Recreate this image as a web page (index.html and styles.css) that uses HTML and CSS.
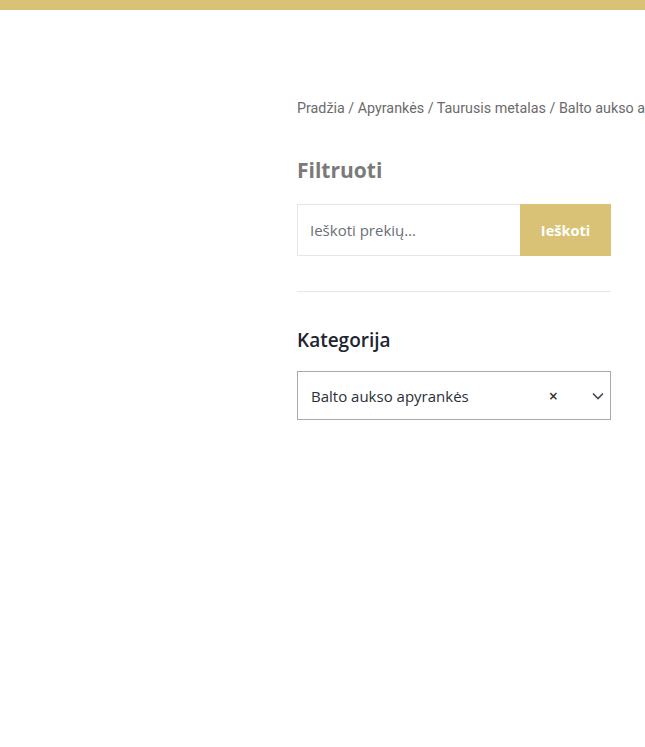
FILE: index.html
```html
<!DOCTYPE html>
<html lang="lt">
<head>
<meta charset="utf-8">
<link rel="stylesheet" href="styles.css">
</head>
<body>
<div class="topbar"></div>
<main class="page">
  <aside class="sidebar">
    <nav class="breadcrumb">Pradžia / Apyrankės / Taurusis metalas / Balto aukso apyrankės</nav>
    <h2 class="filter-title">Filtruoti</h2>
    <form class="search">
      <input class="search-input" type="text" placeholder="Ieškoti prekių…">
      <button class="search-btn" type="button">Ieškoti</button>
    </form>
    <hr class="divider">
    <h3 class="cat-title">Kategorija</h3>
    <div class="select">
      <span class="select-value">Balto aukso apyrankės</span>
      <span class="select-clear">×</span>
      <svg class="select-arrow" width="14" height="14" viewBox="0 0 14 14"><path d="M2 4.5 L7 9.5 L12 4.5" fill="none" stroke="#444a55" stroke-width="1.6"/></svg>
    </div>
  </aside>
</main>
</body>
</html>
```

FILE: styles.css
```css
html, body {
  margin: 0;
  padding: 0;
  overflow: hidden;
  background: #fff;
}
body {
  font-family: "Open Sans", sans-serif;
  width: 645px;
  height: 747px;
}
.topbar {
  height: 10px;
  background: #d9c275;
}
.page {
  padding-left: 297px;
  padding-top: 88px;
}
.sidebar {
  width: 314px;
}
.breadcrumb {
  font-family: "Roboto", sans-serif;
  font-size: 14.3px;
  line-height: 20px;
  color: #6b6b6b;
  white-space: nowrap;
  overflow: hidden;
  width: 348px;
}
.filter-title {
  margin: 37px 0 0;
  font-size: 21px;
  line-height: 30px;
  font-weight: 700;
  color: #7a7a7a;
}
.search {
  display: flex;
  margin-top: 19px;
  height: 52px;
}
.search-input {
  flex: 1;
  min-width: 0;
  box-sizing: border-box;
  border: 1px solid #e6e6e9;
  border-right: none;
  padding: 0 12px;
  font-family: "Open Sans", sans-serif;
  font-size: 15px;
  color: #555;
  outline: none;
}
.search-input::placeholder {
  color: #6b6e75;
}
.search-btn {
  width: 91px;
  border: none;
  background: #d9c275;
  color: #fff;
  font-family: "Open Sans", sans-serif;
  font-size: 14.5px;
  font-weight: 700;
  padding: 0;
}
.divider {
  margin: 35px 0 0;
  border: none;
  border-top: 1px solid #e6e6e9;
  height: 0;
}
.cat-title {
  margin: 35px 0 0;
  font-size: 19px;
  line-height: 26px;
  font-weight: 600;
  color: #1e2430;
}
.select {
  margin-top: 18px;
  height: 49px;
  box-sizing: border-box;
  border: 1px solid #aaaaaa;
  display: flex;
  align-items: center;
  padding: 0 5px 0 13px;
  font-size: 15px;
  color: #2b2f38;
}
.select-value {
  flex: 1;
}
.select-clear {
  font-size: 16px;
  font-weight: 600;
  margin-right: 33px;
  color: #333;
}
.select-arrow {
  display: block;
}
```
